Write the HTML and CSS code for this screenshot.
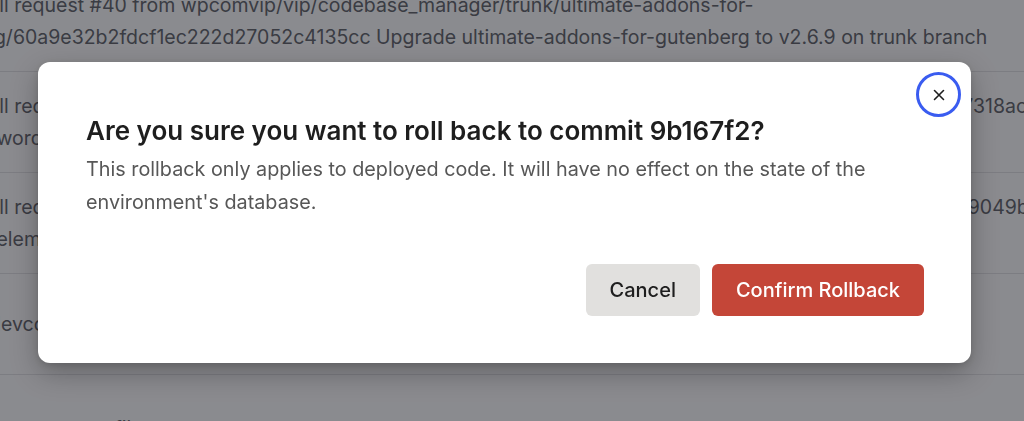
FILE: index.html
```html
<!DOCTYPE html>
<html lang="en">
<head>
<meta charset="utf-8">
<title>Confirm rollback</title>
<link rel="stylesheet" href="styles.css">
</head>
<body>
<main class="page">
  <ul class="commits">
    <li class="commit">
      <div class="line">Merge pull request #40 from wpcomvip/vip/codebase_manager/trunk/ultimate-addons-for-</div>
      <div class="line">gutenberg/60a9e32b2fdcf1ec222d27052c4135cc Upgrade ultimate-addons-for-gutenberg to v2.6.9 on trunk branch</div>
    </li>
    <li class="commit">
      <div class="line">Merge pull request #39 from wpcomvip/vip/codebase_manager/trunk/wordpress-seo/2c7e1d5a0b9f4e6c7d8ab3e7318acf4b</div>
      <div class="line">Upgrade wordpress-seo to v20.4 on trunk branch</div>
    </li>
    <li class="commit">
      <div class="line">Merge pull request #38 from wpcomvip/vip/codebase_manager/trunk/elementor/a7d3f1e2b6c8d0e1f5a2c3b4d6e79049b2c7</div>
      <div class="line">Upgrade elementor to v3.12.1 on trunk branch</div>
    </li>
    <li class="commit">
      <div class="line">Update .devcontainer configuration</div>
    </li>
    <li class="commit commit-last">
      <div class="line">Remove unnecessary files</div>
    </li>
  </ul>
</main>

<div class="overlay">
  <div class="modal" role="dialog" aria-labelledby="modal-title">
    <button class="close" aria-label="Close">
      <svg width="12" height="12" viewBox="0 0 12 12" aria-hidden="true">
        <path d="M1.5 1.5 L10.5 10.5 M10.5 1.5 L1.5 10.5" stroke="#1e1e1e" stroke-width="1.6" stroke-linecap="round" fill="none"/>
      </svg>
    </button>
    <h1 id="modal-title" class="title">Are you sure you want to roll back to commit 9b167f2?</h1>
    <p class="desc">This rollback only applies to deployed code. It will have no effect on the state of the environment's database.</p>
    <div class="actions">
      <button class="btn btn-secondary">Cancel</button>
      <button class="btn btn-danger">Confirm Rollback</button>
    </div>
  </div>
</div>
</body>
</html>
```

FILE: styles.css
```css
* { box-sizing: border-box; }

html, body {
  margin: 0;
  padding: 0;
  height: 100%;
  overflow: hidden;
}

body {
  background: #ffffff;
  font-family: Inter, "Liberation Sans", sans-serif;
  color: #1e1e1e;
}

.page {
  overflow: hidden;
  height: 100%;
}

.commits {
  list-style: none;
  margin: -29px 0 0 -89px;
  padding: 0;
}

.commit {
  min-height: 101px;
  padding: 18px 0;
  border-bottom: 1px solid #e6e6e8;
  display: flex;
  flex-direction: column;
  justify-content: center;
}

.commit-last {
  justify-content: flex-start;
  padding-top: 37px;
}

.line {
  font-size: 19.5px;
  line-height: 32px;
  color: #6c6d73;
  white-space: nowrap;
}

.overlay {
  position: fixed;
  inset: 0;
  background: rgba(0, 2, 10, 0.46);
  display: flex;
  align-items: flex-start;
  padding: 62px 0 0 38px;
}

.modal {
  position: relative;
  width: 933px;
  background: #ffffff;
  border-radius: 12px;
  padding: 53px 47px 47px 48px;
  box-shadow: 0 10px 28px rgba(0, 0, 0, 0.28), 0 2px 6px rgba(0, 0, 0, 0.12);
}

.close {
  position: absolute;
  top: 10px;
  right: 10px;
  width: 45px;
  height: 45px;
  border-radius: 50%;
  border: 3px solid #3a5cf0;
  background: #ffffff;
  display: flex;
  align-items: center;
  justify-content: center;
  padding: 0;
  cursor: pointer;
}

.title {
  margin: 0;
  font-size: 26px;
  line-height: 32px;
  font-weight: 600;
  color: #1e1e1e;
}

.desc {
  margin: 6px 0 0;
  font-size: 19.8px;
  line-height: 33px;
  color: #575757;
}

.actions {
  display: flex;
  justify-content: flex-end;
  gap: 12px;
  margin-top: 45px;
}

.btn {
  height: 52px;
  padding: 0 24px;
  border: none;
  border-radius: 6px;
  font-family: Inter, "Liberation Sans", sans-serif;
  font-size: 20px;
  font-weight: 500;
  cursor: pointer;
}

.btn-secondary {
  background: #e1e0de;
  color: #1e1e1e;
}

.btn-danger {
  background: #c44638;
  color: #ffffff;
}
```
